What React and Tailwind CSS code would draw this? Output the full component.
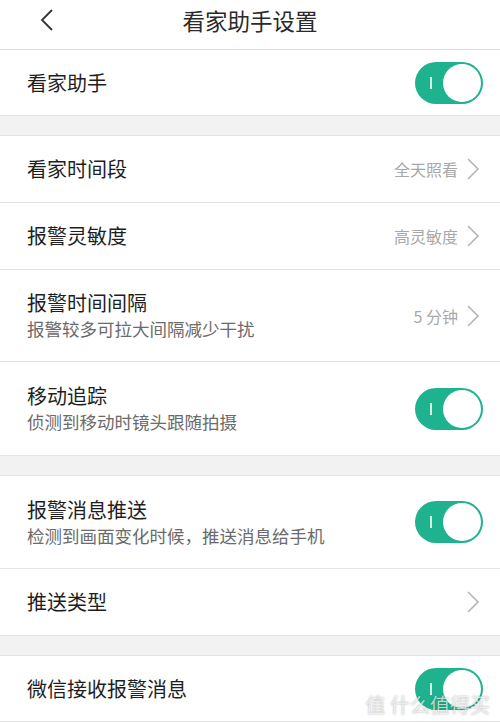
import React from "react";

const font = { fontFamily: '"Noto Sans CJK SC", "Noto Sans", sans-serif' };

// Right chevron, thin grey stroke
const Chevron = () => (
  <svg width="14" height="22" viewBox="0 0 14 22" className="ml-2 shrink-0">
    <path d="M2 1 L12 11 L2 21" fill="none" stroke="#b5b5b5" strokeWidth="1.6" />
  </svg>
);

const Toggle = () => (
  <div className="w-[68px] h-[42px] rounded-full bg-[#1fb28e] relative shrink-0">
    <div className="absolute left-[15px] top-[15px] w-[2px] h-[12px] bg-white/80" />
    <div className="absolute right-[2px] top-[2px] w-[38px] h-[38px] rounded-full bg-white" />
  </div>
);

const Row = ({ title, subtitle, value, toggle, chevron, h }) => (
  <div
    className={`flex items-center justify-between pl-[27px] pr-[17px] bg-white border-b border-[#e3e3e3] ${h}`}
  >
    <div className="flex flex-col">
      <span className="text-[20px] leading-[26px] text-[#1e1e1e]">{title}</span>
      {subtitle && (
        <span className="text-[17.5px] leading-[24px] text-[#6b6b6b] mt-[1px]">{subtitle}</span>
      )}
    </div>
    {toggle && <Toggle />}
    {chevron && (
      <div className="flex items-center pr-[3px]">
        {value && <span className="text-[16px] text-[#a8a8a8]">{value}</span>}
        <Chevron />
      </div>
    )}
  </div>
);

const Gap = () => <div className="h-[20px] bg-[#f2f2f2] border-b border-[#e3e3e3]" />;

export default function App() {
  return (
    <div className="w-[500px] h-[722px] overflow-hidden bg-[#f2f2f2] relative" style={font}>
      {/* Header */}
      <div className="h-[50px] bg-white border-b border-[#dcdcdc] flex items-center relative">
        <svg width="14" height="22" viewBox="0 0 14 22" className="absolute left-[40px] top-[9px]">
          <path d="M12 1 L2 11 L12 21" fill="none" stroke="#333" strokeWidth="1.8" />
        </svg>
        <div className="w-full text-center text-[22.5px] text-[#2a2a2a] -mt-[8px]">看家助手设置</div>
      </div>

      <Row title="看家助手" toggle h="h-[66px]" />
      <Gap />
      <Row title="看家时间段" value="全天照看" chevron h="h-[67px]" />
      <Row title="报警灵敏度" value="高灵敏度" chevron h="h-[67px]" />
      <Row title="报警时间间隔" subtitle="报警较多可拉大间隔减少干扰" value="5 分钟" chevron h="h-[92px]" />
      <Row title="移动追踪" subtitle="侦测到移动时镜头跟随拍摄" toggle h="h-[94px]" />
      <Gap />
      <Row title="报警消息推送" subtitle="检测到画面变化时候，推送消息给手机" toggle h="h-[93px]" />
      <Row title="推送类型" chevron h="h-[67px]" />
      <Gap />
      <Row title="微信接收报警消息" toggle h="h-[66px]" />

      {/* watermark */}
      <div className="absolute right-[10px] bottom-[2px] text-[20px] text-white/70 [text-shadow:0_0_2px_rgba(0,0,0,0.35)]">
        值 什么值得买
      </div>
    </div>
  );
}
